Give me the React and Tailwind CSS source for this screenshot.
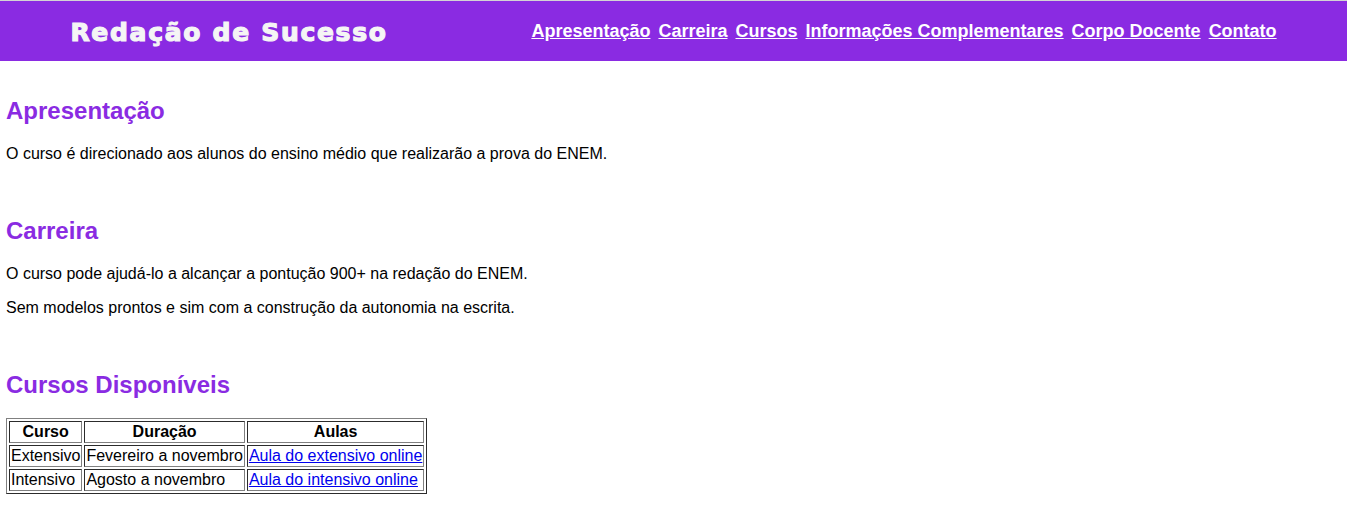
import React from "react";

const navItems = [
  "Apresentação",
  "Carreira",
  "Cursos",
  "Informações Complementares",
  "Corpo Docente",
  "Contato",
];

export default function App() {
  return (
    <div className="min-h-screen bg-white text-black font-['Liberation_Sans',Arial,sans-serif] text-[16px] leading-[normal]">
      <header className="border-t border-[#d4d4d4] bg-[#8a2be2] h-[61px] flex items-center justify-around">
        <h1 className="font-['DejaVu_Sans',sans-serif] font-bold text-[25px] leading-[normal] tracking-[1.7px] text-[#f5f5f5] [-webkit-text-stroke:1.2px_#f5f5f5] mt-[2px]">
          Redação de Sucesso
        </h1>
        <nav className="flex gap-2 ml-[3px]">
          {navItems.map((item) => (
            <a
              key={item}
              href="#"
              className="text-white font-bold text-[18px] leading-[normal] underline"
            >
              {item}
            </a>
          ))}
        </nav>
      </header>

      <main className="px-[6px] flex flex-col gap-[54px] pt-[36px] pb-[20px]">
        <section className="flex flex-col">
          <h2 className="text-[24px] font-bold text-[#8a2be2] leading-[normal]">
            Apresentação
          </h2>
          <div className="mt-[20px] flex flex-col gap-4">
            <p>O curso é direcionado aos alunos do ensino médio que realizarão a prova do ENEM.</p>
          </div>
        </section>

        <section className="flex flex-col">
          <h2 className="text-[24px] font-bold text-[#8a2be2] leading-[normal]">
            Carreira
          </h2>
          <div className="mt-[20px] flex flex-col gap-4">
            <p>O curso pode ajudá-lo a alcançar a pontução 900+ na redação do ENEM.</p>
            <p>Sem modelos prontos e sim com a construção da autonomia na escrita.</p>
          </div>
        </section>

        <section className="flex flex-col">
          <h2 className="text-[24px] font-bold text-[#8a2be2] leading-[normal]">
            Cursos Disponíveis
          </h2>
          <div className="mt-[19px] flex">
            <table className="border-separate border-spacing-[2px] border border-[gray] [border-style:outset]">
              <thead>
                <tr>
                  <th className="border border-[gray] [border-style:inset] p-px font-bold text-center">Curso</th>
                  <th className="border border-[gray] [border-style:inset] p-px font-bold text-center">Duração</th>
                  <th className="border border-[gray] [border-style:inset] p-px font-bold text-center">Aulas</th>
                </tr>
              </thead>
              <tbody>
                <tr>
                  <td className="border border-[gray] [border-style:inset] p-px">Extensivo</td>
                  <td className="border border-[gray] [border-style:inset] p-px">Fevereiro a novembro</td>
                  <td className="border border-[gray] [border-style:inset] p-px">
                    <a href="#" className="text-[#0000ee] underline">Aula do extensivo online</a>
                  </td>
                </tr>
                <tr>
                  <td className="border border-[gray] [border-style:inset] p-px">Intensivo</td>
                  <td className="border border-[gray] [border-style:inset] p-px">Agosto a novembro</td>
                  <td className="border border-[gray] [border-style:inset] p-px">
                    <a href="#" className="text-[#0000ee] underline">Aula do intensivo online</a>
                  </td>
                </tr>
              </tbody>
            </table>
          </div>
        </section>
      </main>
    </div>
  );
}
